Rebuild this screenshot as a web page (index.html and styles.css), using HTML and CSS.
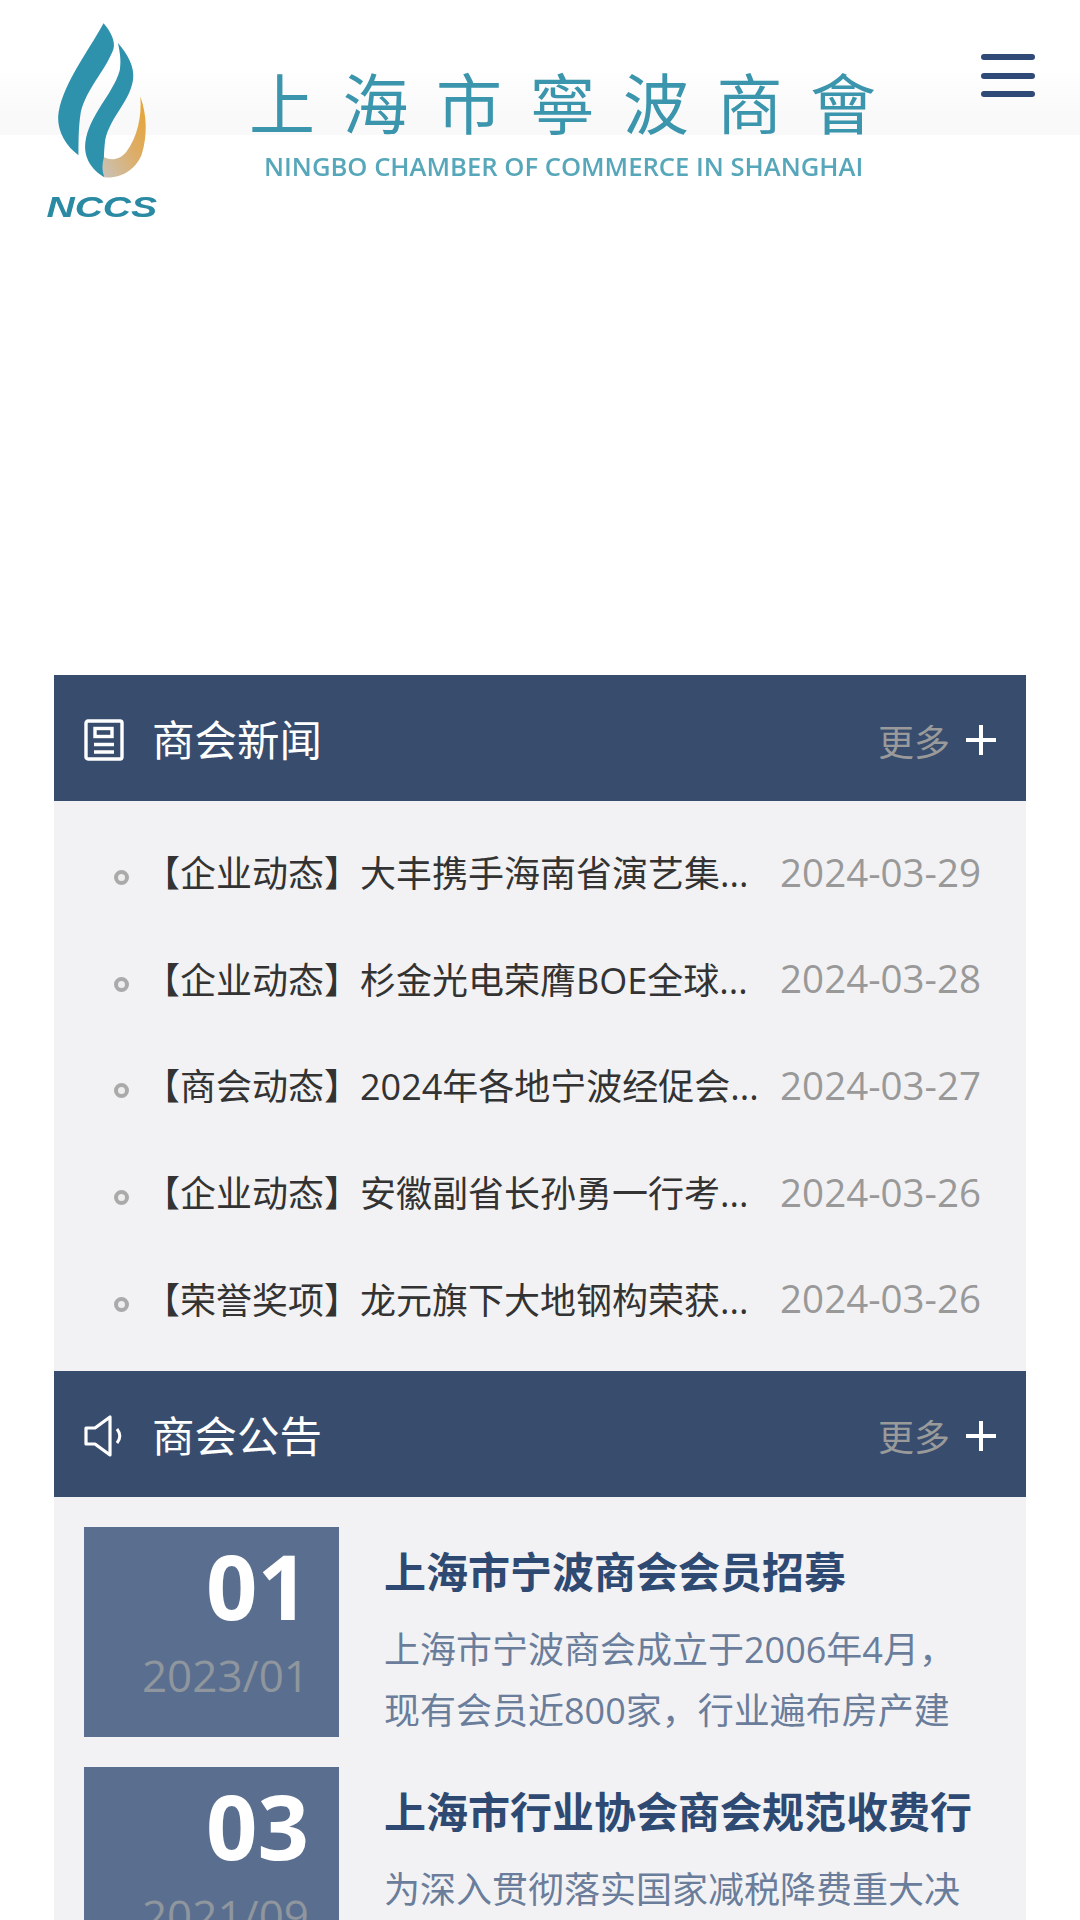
FILE: index.html
```html
<!DOCTYPE html>
<html lang="zh-CN">
<head>
    <meta charset="UTF-8">
    <meta name="viewport" content="width=device-width, initial-scale=1.0">
    <title>上海市宁波商会</title>
    <link rel="stylesheet" href="styles.css">
</head>
<body>
    <header class="topbar">
        <a class="logo" href="#">
            <svg class="logo-mark" viewBox="125 60 340 590" width="117" height="203">
                <defs>
                    <linearGradient id="flame" x1="0" y1="1" x2="1" y2="0">
                        <stop offset="0" stop-color="#c9c3b8"/>
                        <stop offset="0.5" stop-color="#dcae6c"/>
                        <stop offset="1" stop-color="#e8a22c"/>
                    </linearGradient>
                </defs>
                <path fill="#2f92ad" d="M298 72C318 95 335 125 326 150C300 215 250 260 232 330C224 380 226 420 225 456C190 430 165 390 166 345C172 260 250 160 298 72Z"/>
                <path fill="#2f92ad" d="M340 130C370 165 388 200 384 235C375 300 320 340 303 410C298 450 298 490 300 520C265 500 240 465 245 420C255 340 325 280 345 210C350 180 345 155 340 130Z"/>
                <path fill="url(#flame)" d="M405 285C425 340 425 400 410 450C395 495 350 525 300 520C293 500 293 480 300 462C320 472 345 470 365 445C395 405 410 345 405 285Z"/>
                <text class="logo-nccs" x="132" y="636" textLength="322" lengthAdjust="spacingAndGlyphs">NCCS</text>
            </svg>
            <div class="logo-text">
                <div class="logo-cn">上海市寧波商會</div>
                <div class="logo-en">NINGBO CHAMBER OF COMMERCE IN SHANGHAI</div>
            </div>
        </a>
        <button class="menu-btn" aria-label="menu"><span></span><span></span><span></span></button>
    </header>

    <main class="content">
        <section class="panel">
            <div class="panel-head">
                <svg class="panel-icon" viewBox="0 0 40 42" width="40" height="42" fill="none" stroke="#fff" stroke-width="3.4">
                    <rect x="2" y="2" width="36" height="38" rx="2"/>
                    <rect x="11" y="9.5" width="17" height="8"/>
                    <path d="M10 25.5h20M10 33h20"/>
                </svg>
                <h2>商会新闻</h2>
                <a class="more" href="#">更多<i class="plus"></i></a>
            </div>
            <ul class="news">
                <li><a href="#">【企业动态】大丰携手海南省演艺集...</a><span>2024-03-29</span></li>
                <li><a href="#">【企业动态】杉金光电荣膺BOE全球...</a><span>2024-03-28</span></li>
                <li><a href="#">【商会动态】2024年各地宁波经促会...</a><span>2024-03-27</span></li>
                <li><a href="#">【企业动态】安徽副省长孙勇一行考...</a><span>2024-03-26</span></li>
                <li><a href="#">【荣誉奖项】龙元旗下大地钢构荣获...</a><span>2024-03-26</span></li>
            </ul>
        </section>

        <section class="panel">
            <div class="panel-head">
                <svg class="panel-icon" viewBox="0 0 40 42" width="40" height="42" fill="none" stroke="#fff" stroke-width="3.2" stroke-linejoin="round">
                    <path d="M2 13h9L26 2v38L11 29H2z"/>
                    <path d="M33 14c4 5 4 9 0 14" stroke-width="3"/>
                </svg>
                <h2>商会公告</h2>
                <a class="more" href="#">更多<i class="plus"></i></a>
            </div>
            <div class="notices">
                <article class="notice">
                    <div class="notice-date"><b>01</b><span>2023/01</span></div>
                    <div class="notice-body">
                        <h3>上海市宁波商会会员招募</h3>
                        <p>上海市宁波商会成立于2006年4月，现有会员近800家，行业遍布房产建</p>
                    </div>
                </article>
                <article class="notice">
                    <div class="notice-date"><b>03</b><span>2021/09</span></div>
                    <div class="notice-body">
                        <h3>上海市行业协会商会规范收费行</h3>
                        <p>为深入贯彻落实国家减税降费重大决</p>
                    </div>
                </article>
            </div>
        </section>
    </main>
</body>
</html>
```

FILE: styles.css
```css
html, body {
    margin: 0;
    padding: 0;
    height: 1920px;
    overflow: hidden;
}
body {
    width: 1080px;
    background: #fff;
    font-family: "Open Sans", "Noto Sans CJK SC", sans-serif;
    color: #333;
}
a {
    color: inherit;
    text-decoration: none;
}

/* top bar */
.topbar {
    height: 135px;
    display: flex;
    justify-content: space-between;
    align-items: flex-start;
    background: linear-gradient(#fff 50%, #f9f9f9 85%);
}
.logo {
    display: flex;
    align-items: flex-start;
    height: 135px;
    padding-left: 44px;
    filter: blur(0.5px);
}
.logo-mark {
    flex: none;
    margin-top: 19px;
}
.logo-nccs {
    font-family: "Liberation Sans", sans-serif;
    font-size: 88px;
    font-weight: bold;
    font-style: italic;
    fill: #2a8aa3;
}
.logo-text {
    margin-left: 88px;
    margin-top: 56px;
    width: 640px;
    color: #3a95ad;
}
.logo-cn {
    font-family: "Noto Sans CJK TC", sans-serif;
    font-size: 66px;
    font-weight: 400;
    line-height: 88px;
    letter-spacing: 27.5px;
    white-space: nowrap;
}
.logo-en {
    margin-top: 8px;
    margin-left: 15px;
    font-family: "Open Sans", sans-serif;
    font-size: 25.6px;
    font-weight: 600;
    line-height: 30px;
    color: #57a7ba;
    white-space: nowrap;
}
.menu-btn {
    display: flex;
    flex-direction: column;
    gap: 12.6px;
    margin: 54px 45px 0 0;
    padding: 0;
    border: none;
    background: none;
}
.menu-btn span {
    display: block;
    width: 54px;
    height: 6px;
    border-radius: 3px;
    background: #2f4a76;
}

/* panels */
.content {
    padding: 540px 54px 0;
}
.panel-head {
    box-sizing: border-box;
    height: 126px;
    display: flex;
    align-items: center;
    padding: 4px 30px 0;
    background: #384d6e;
    color: #fff;
}
.panel-icon {
    flex: none;
}
.panel-head h2 {
    margin: 0 0 0 28px;
    font-size: 42.5px;
    font-weight: 400;
    line-height: 60px;
}
.more {
    margin-left: auto;
    display: flex;
    align-items: center;
    font-size: 36px;
    color: #9a9a9a;
}
.plus {
    position: relative;
    width: 30px;
    height: 30px;
    margin-left: 16px;
}
.plus::before, .plus::after {
    content: "";
    position: absolute;
    background: #fff;
}
.plus::before {
    left: 0;
    right: 0;
    top: 13px;
    height: 4px;
}
.plus::after {
    top: 0;
    bottom: 0;
    left: 13px;
    width: 4px;
}

/* news list */
.news {
    list-style: none;
    margin: 0;
    padding: 17.5px 45px 19.5px 60px;
    background: #f2f2f4;
}
.news li {
    height: 106.6px;
    display: flex;
    align-items: center;
    font-size: 36px;
}
.news li::before {
    content: "";
    flex: none;
    box-sizing: border-box;
    width: 15px;
    height: 15px;
    margin: 12px 15px 0 0;
    border: 4px solid #aaa;
    border-radius: 50%;
    background: #eee;
}
.news a {
    flex: 1;
    min-width: 0;
    margin-right: 14px;
    white-space: nowrap;
}
.news span {
    flex: none;
    font-size: 38.5px;
    color: #999;
}

/* notices */
.notices {
    padding: 30px 30px 0;
    background: #f2f2f4;
}
.notice {
    display: flex;
    height: 210px;
    margin-bottom: 30px;
}
.notice-date {
    flex: none;
    box-sizing: border-box;
    width: 255px;
    height: 210px;
    padding: 8px 30px 0 0;
    text-align: right;
    background: #5a6e90;
}
.notice-date b {
    display: block;
    font-size: 90px;
    line-height: 100px;
    color: #fff;
}
.notice-date span {
    display: block;
    margin-top: 10px;
    font-size: 44px;
    line-height: 60px;
    color: #8f969d;
}
.notice-body {
    width: 600px;
    margin-left: 45px;
}
.notice-body h3 {
    margin: 15px 0 0;
    font-size: 42px;
    line-height: 60px;
    color: #2e4a72;
}
.notice-body p {
    margin: 17px 0 0;
    font-size: 36px;
    line-height: 61px;
    color: #6a7d9b;
}
```
